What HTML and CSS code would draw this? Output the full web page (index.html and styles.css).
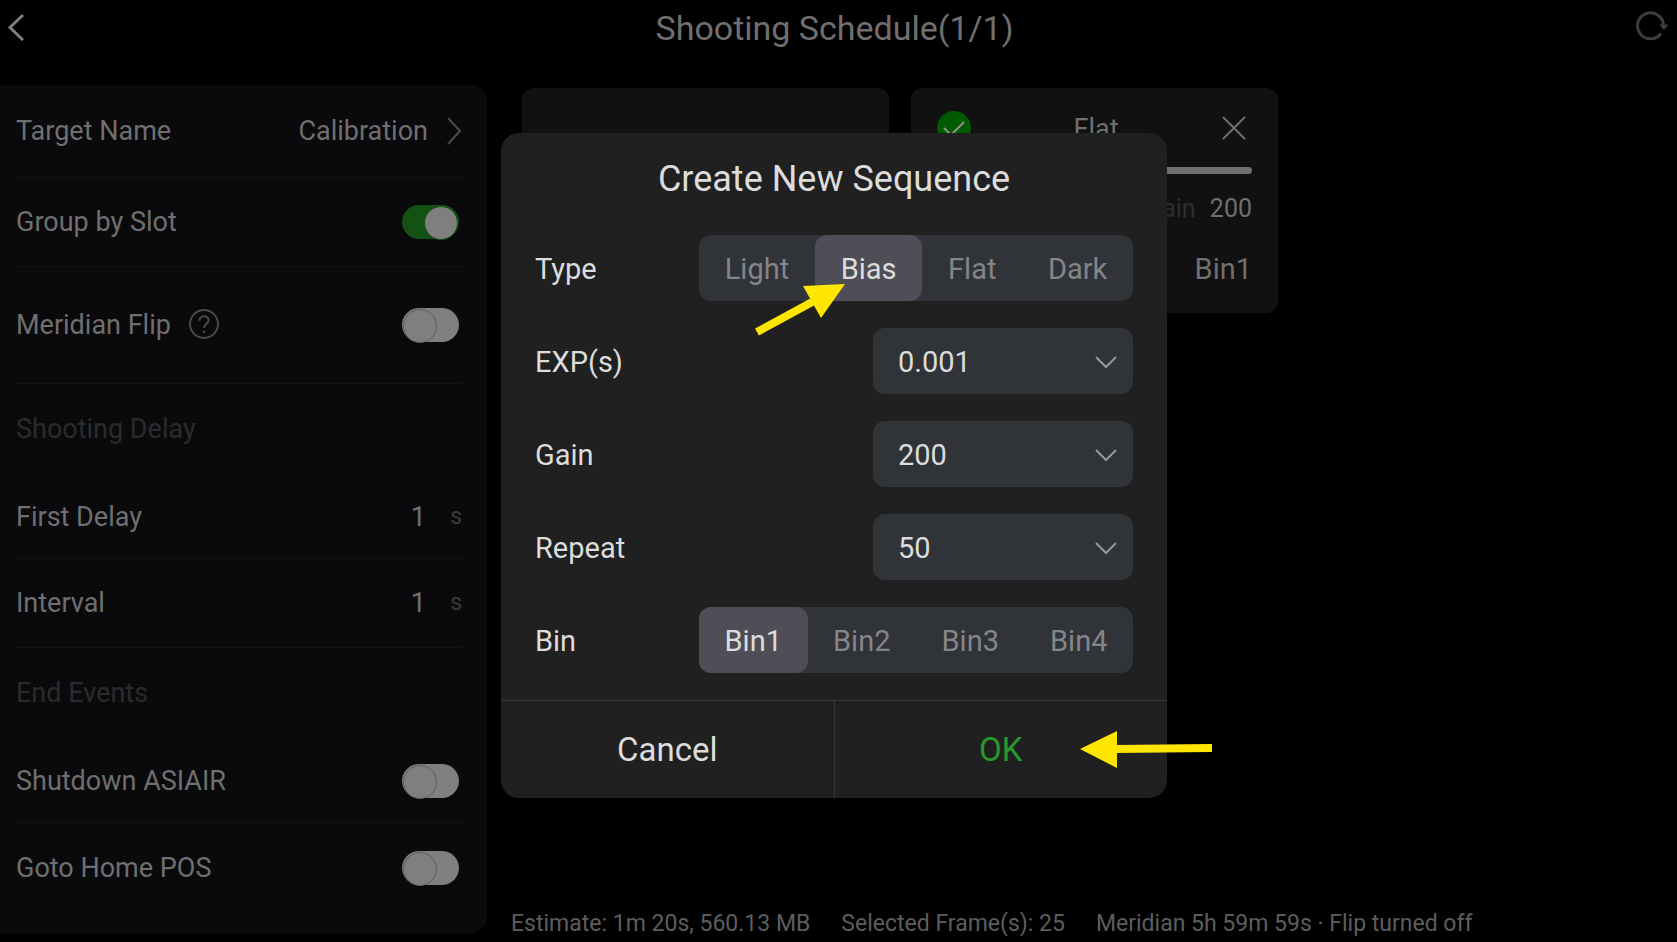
FILE: index.html
```html
<!DOCTYPE html>
<html lang="en">
<head>
  <meta charset="UTF-8">
  <meta name="viewport" content="width=device-width, initial-scale=1.0">
  <title>Shooting Schedule</title>
  <link rel="stylesheet" href="styles.css">
</head>
<body>
  <div class="app">
    <header class="topbar">
      <button class="icon-button back" aria-label="Back">
        <svg width="18" height="28" viewBox="0 0 18 28"><path d="M16 2 L3 14.5 L16 27" /></svg>
      </button>
      <h1>Shooting Schedule(1/1)</h1>
      <button class="icon-button refresh" aria-label="Refresh">
        <svg width="34" height="32" viewBox="0 0 34 32">
          <path d="M25 22.5 A13 13 0 1 1 27.5 14" />
          <path class="tip" d="M24 14 H32 L28 18.5 Z" />
        </svg>
      </button>
    </header>

    <main class="content">
      <aside class="sidebar">
        <div class="row row-target">
          <span>Target Name</span>
          <button class="target">
            Calibration
            <svg width="16" height="28" viewBox="0 0 16 28"><path d="M2 1 L14 14 L2 27" /></svg>
          </button>
        </div>
        <div class="row">
          <label for="groupBySlot">Group by Slot</label>
          <input id="groupBySlot" class="switch" type="checkbox" checked>
        </div>
        <div class="row row-tall">
          <label for="meridianFlip">Meridian Flip</label>
          <button class="icon-button help" aria-label="Help">
            <svg width="32" height="32" viewBox="0 0 32 32">
              <circle cx="16" cy="15" r="14" />
              <path d="M11.5 11.8 C11.5 5.6 20.6 5.8 20.6 11.3 C20.6 14.6 16.1 15 16.1 19" />
              <path d="M16.1 21.6 V24" />
            </svg>
          </button>
          <input id="meridianFlip" class="switch" type="checkbox">
        </div>
        <h2>Shooting Delay</h2>
        <div class="row row-short">
          <label for="firstDelay">First Delay</label>
          <input id="firstDelay" class="number" type="text" value="1">
          <span class="unit">s</span>
        </div>
        <div class="row">
          <label for="interval">Interval</label>
          <input id="interval" class="number" type="text" value="1">
          <span class="unit">s</span>
        </div>
        <h2>End Events</h2>
        <div class="row row-short">
          <label for="shutdown">Shutdown ASIAIR</label>
          <input id="shutdown" class="switch" type="checkbox">
        </div>
        <div class="row row-last">
          <label for="gotoHome">Goto Home POS</label>
          <input id="gotoHome" class="switch" type="checkbox">
        </div>
      </aside>

      <section class="schedule">
        <div class="cards">
          <div class="card"></div>
          <div class="card">
            <div class="card-head">
              <svg class="check" width="34" height="34" viewBox="0 0 34 34">
                <circle cx="17" cy="17" r="17" />
                <path d="M7 17 L14 24 L27 11" />
              </svg>
              <h3>Flat</h3>
              <button class="icon-button close" aria-label="Remove">
                <svg width="26" height="26" viewBox="0 0 26 26"><path d="M2 2 L24 24 M24 2 L2 24" /></svg>
              </button>
            </div>
            <div class="progress"></div>
            <p class="card-gain"><span>Gain</span> 200</p>
            <p class="card-bin">Bin1</p>
          </div>
        </div>
        <footer class="status">
          <span>Estimate: 1m 20s, 560.13 MB</span>
          <span>Selected Frame(s): 25</span>
          <span>Meridian 5h 59m 59s · Flip turned off</span>
        </footer>
      </section>
    </main>
  </div>

  <div class="overlay">
    <form class="modal" role="dialog" aria-labelledby="modalTitle">
      <h2 id="modalTitle">Create New Sequence</h2>
      <div class="fields">
        <div class="field" role="radiogroup" aria-labelledby="typeLabel">
          <span id="typeLabel">Type</span>
          <div class="segments">
            <label><input type="radio" name="type">Light</label>
            <label><input type="radio" name="type" checked>Bias</label>
            <label><input type="radio" name="type">Flat</label>
            <label><input type="radio" name="type">Dark</label>
          </div>
        </div>
        <div class="field">
          <label for="exp">EXP(s)</label>
          <div class="select">
            <select id="exp"><option>0.001</option></select>
            <svg width="22" height="14" viewBox="0 0 22 14"><path d="M1 2 L11 12 L21 2" /></svg>
          </div>
        </div>
        <div class="field">
          <label for="gain">Gain</label>
          <div class="select">
            <select id="gain"><option>200</option></select>
            <svg width="22" height="14" viewBox="0 0 22 14"><path d="M1 2 L11 12 L21 2" /></svg>
          </div>
        </div>
        <div class="field">
          <label for="repeat">Repeat</label>
          <div class="select">
            <select id="repeat"><option>50</option></select>
            <svg width="22" height="14" viewBox="0 0 22 14"><path d="M1 2 L11 12 L21 2" /></svg>
          </div>
        </div>
        <div class="field" role="radiogroup" aria-labelledby="binLabel">
          <span id="binLabel">Bin</span>
          <div class="segments">
            <label><input type="radio" name="bin" checked>Bin1</label>
            <label><input type="radio" name="bin">Bin2</label>
            <label><input type="radio" name="bin">Bin3</label>
            <label><input type="radio" name="bin">Bin4</label>
          </div>
        </div>
      </div>
      <div class="actions">
        <button type="button">Cancel</button>
        <button type="button" class="ok">OK</button>
      </div>

      <svg class="arrow arrow-type" width="92" height="54" viewBox="0 0 92 54">
        <path class="shaft" d="M2 48 L59 17" />
        <path class="head" d="M90 0 L48 2 L66 34 Z" />
      </svg>
      <svg class="arrow arrow-ok" width="132" height="38" viewBox="0 0 132 38">
        <path class="shaft" d="M36 18 L132 17" />
        <path class="head" d="M0 18 L37 0 V37 Z" />
      </svg>
    </form>
  </div>
</body>
</html>
```

FILE: styles.css
```css
* {
  box-sizing: border-box;
}
body {
  margin: 0;
  background-color: #000;
  color: #6f6f70;
  font-family: Roboto, sans-serif;
  font-size: 27px;
  line-height: 34px;
}
h1, h2, h3, p {
  margin: 0;
  font-size: inherit;
  font-weight: normal;
}
button, input, select {
  margin: 0;
  padding: 0;
  border: none;
  background: none;
  color: inherit;
  font: inherit;
}
svg {
  display: block;
  fill: none;
  stroke: currentColor;
  stroke-width: 2;
}
.app {
  display: flex;
  flex-direction: column;
  min-height: 100vh;
}

/* top bar */
.topbar {
  display: flex;
  justify-content: space-between;
  height: 85px;
  padding: 8px 7px;
}
.topbar h1 {
  font-size: 34px;
  line-height: 40px;
}
.icon-button {
  display: flex;
  align-items: center;
  justify-content: center;
  cursor: pointer;
}
.back, .refresh {
  height: 38px;
}
.back {
  width: 26px;
  justify-content: flex-start;
  color: #7e7e7e;
}
.refresh {
  color: #3c3c3c;
}
.back svg, .refresh svg {
  stroke-width: 3;
}
.refresh .tip {
  fill: currentColor;
  stroke-width: 1;
}

/* settings */
.content {
  display: flex;
  flex: 1;
  padding-bottom: 9px;
}
.sidebar {
  flex: none;
  width: 499px;
  margin-left: -12px;
  padding: 0 25px 0 28px;
  border-radius: 16px;
  background-color: #0a0a0c;
}
.row {
  display: flex;
  align-items: center;
  height: 89px;
  border-bottom: 1px solid #131315;
}
.row > :first-child {
  margin-right: auto;
}
.row-target {
  height: 93px;
}
.row-tall {
  height: 117px;
}
.row-short {
  height: 84px;
}
.row-last {
  border-bottom: none;
}
.sidebar h2 {
  height: 91px;
  line-height: 91px;
  color: #2b2b2d;
}
.target {
  display: flex;
  align-items: center;
  gap: 18px;
}
.target svg {
  color: #4b4b4c;
}
.row-tall > label:first-child {
  margin-right: 17px;
}
.help {
  margin-right: auto;
  color: #4b4b4c;
}
.number {
  width: 100px;
  text-align: right;
}
.unit {
  width: 36px;
  color: #3b3b3c;
  font-size: 23px;
  text-align: right;
}
.switch {
  appearance: none;
  display: flex;
  width: 57px;
  height: 34px;
  margin-right: 3px;
  padding: 1px;
  border-radius: 17px;
  background-color: #7f7f7f;
  cursor: pointer;
}
.switch::before {
  content: "";
  width: 32px;
  height: 32px;
  border: 1px solid #5c5c5c;
  border-radius: 50%;
  background-color: #7f7f7f;
}
.switch:checked {
  justify-content: flex-end;
  background-color: #145214;
}
.switch:checked::before {
  border-color: #145214;
}

/* sequences */
.schedule {
  display: flex;
  flex: 1;
  flex-direction: column;
  justify-content: space-between;
  padding: 3px 25px 0 35px;
}
.cards {
  display: flex;
  gap: 22px;
}
.card {
  width: 367px;
  height: 225px;
  padding: 22px 26px;
  border-radius: 12px;
  background-color: #111;
}
.card-head {
  display: flex;
  align-items: center;
  justify-content: space-between;
  padding-right: 5px;
}
.card-head h3 {
  padding-top: 2px;
}
.check {
  color: #8f8f8f;
}
.check circle {
  fill: #005a00;
  stroke: none;
}
.progress {
  height: 7px;
  margin-top: 21px;
  border-radius: 4px;
  background-color: #6f6f70;
}
.card-gain {
  margin-top: 18px;
  font-size: 25px;
  text-align: right;
}
.card-gain span {
  margin-right: 8px;
  color: #2e2e2e;
}
.card-bin {
  margin-top: 26px;
  font-size: 29px;
  text-align: right;
}
.status {
  display: flex;
  gap: 31px;
  margin-left: -11px;
  color: #5d5d5e;
  font-size: 23px;
  line-height: 18px;
}

/* dialog */
.overlay {
  position: absolute;
  inset: 0;
  display: flex;
  align-items: center;
  justify-content: center;
  padding: 0 9px 12px 0;
}
.modal {
  position: relative;
  width: 666px;
  border-radius: 18px;
  background-color: #202020;
  color: #dcdcdc;
  font-size: 29px;
}
.modal h2 {
  padding: 25px 0 35px;
  font-size: 36px;
  line-height: 42px;
  text-align: center;
}
.fields {
  display: flex;
  flex-direction: column;
  gap: 27px;
  padding: 0 34px 27px;
}
.field {
  display: flex;
  align-items: center;
  justify-content: space-between;
}
.field > label, .field > span {
  padding-top: 2px;
}
.segments {
  display: flex;
  width: 434px;
  border-radius: 12px;
  background-color: #303338;
  color: #858588;
}
.segments label {
  flex: 1 1 auto;
  padding-top: 2px;
  border-radius: 12px;
  line-height: 64px;
  text-align: center;
  cursor: pointer;
}
.segments label:has(:checked) {
  background-color: #4f4e56;
  color: #dcdcdc;
}
.segments input {
  position: absolute;
  opacity: 0;
}
.select {
  position: relative;
  width: 260px;
}
.select select {
  appearance: none;
  display: block;
  width: 100%;
  height: 66px;
  padding: 2px 25px 0;
  border-radius: 12px;
  background-color: #303338;
}
.select svg {
  position: absolute;
  top: 27px;
  right: 16px;
  color: #98989a;
  pointer-events: none;
}
.actions {
  display: flex;
  border-top: 1px solid #373737;
}
.actions button {
  flex: 1;
  height: 97px;
  padding-top: 2px;
  font-size: 33px;
  cursor: pointer;
}
.actions .ok {
  border-left: 1px solid #373737;
  color: #259a2b;
}

/* hint arrows */
.arrow {
  position: absolute;
  color: #ffe600;
  pointer-events: none;
}
.arrow .shaft {
  stroke-width: 8;
}
.arrow .head {
  fill: currentColor;
  stroke: none;
}
.arrow-type {
  top: 151px;
  left: 254px;
  overflow: visible;
}
.arrow-ok {
  top: 598px;
  left: 579px;
}
```
